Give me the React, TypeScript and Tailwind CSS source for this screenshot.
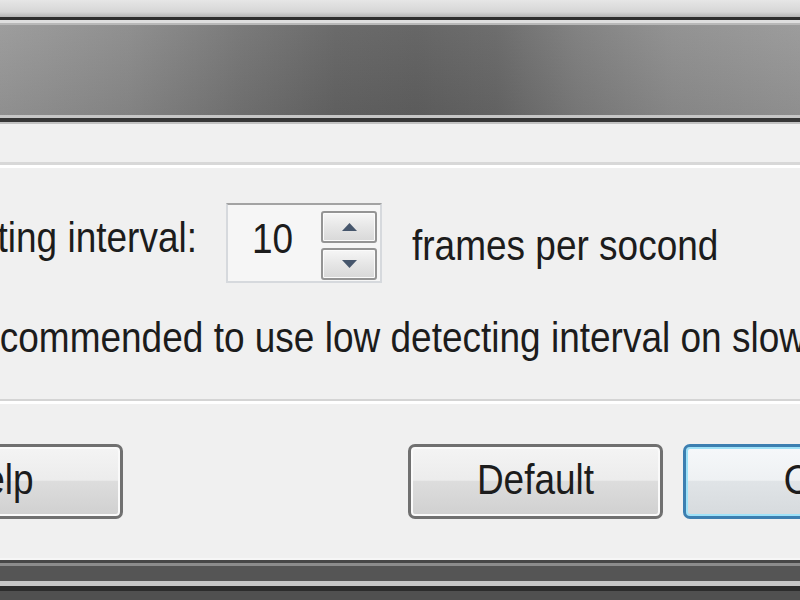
import React from "react";

function Txt({ children, className = "" }: { children: React.ReactNode; className?: string }) {
  // text in the screenshot is a bit taller than Arial at the same width
  return (
    <span className={`inline-block whitespace-nowrap text-[37px] leading-none scale-y-113 ${className}`}>
      {children}
    </span>
  );
}

function Arrow({ down }: { down?: boolean }) {
  return (
    <svg width="15" height="8" viewBox="0 0 15 8">
      <polygon points={down ? "0,0 15,0 7.5,8" : "7.5,0 15,8 0,8"} fill="#46566c" />
    </svg>
  );
}

function SpinBox() {
  return (
    <div className="ml-[29px] flex h-[80px] w-[156px] border-2 border-[#d6d9dd] border-t-[#a3a3a3] bg-[#f6f6f6]">
      <div className="flex-1 pl-[24px] pt-[15px]">
        <Txt>10</Txt>
      </div>
      <div className="mr-[3px] flex w-[56px] flex-col gap-[5px] pt-[6px]">
        <div className="flex h-[32px] items-center justify-center rounded-[3px] border-2 border-[#949494] bg-[linear-gradient(to_bottom,#f6f6f6,#e6e6e6_50%,#d8d8d8)] shadow-[inset_0_0_0_1px_#fbfbfb]">
          <Arrow />
        </div>
        <div className="flex h-[32px] items-center justify-center rounded-[3px] border-2 border-[#949494] bg-[linear-gradient(to_bottom,#f6f6f6,#e6e6e6_50%,#d8d8d8)] shadow-[inset_0_0_0_1px_#fbfbfb]">
          <Arrow down />
        </div>
      </div>
    </div>
  );
}

function Btn({ label, focused, className = "" }: { label: string; focused?: boolean; className?: string }) {
  const look = focused
    ? "border-[#3c7fb1] shadow-[inset_0_0_0_2px_#9fe2f8] bg-[linear-gradient(to_bottom,#f6f8fa_0%,#eef1f3_48%,#e0e4e7_50%,#d6dadd_100%)]"
    : "border-[#707070] shadow-[inset_0_0_0_2px_#fafafa] bg-[linear-gradient(to_bottom,#f4f4f4_0%,#ececec_48%,#dddddd_50%,#d0d0d0_100%)]";
  return (
    <div
      className={`flex h-[75px] w-[255px] shrink-0 items-center justify-center rounded-[7px] border-[3px] pb-1 ${look} ${className}`}
    >
      <Txt>{label}</Txt>
    </div>
  );
}

export default function App() {
  return (
    <div className="flex h-[600px] w-[800px] flex-col overflow-hidden bg-[#f0f0f0] font-['Liberation_Sans',Arial,sans-serif] text-[#1c1c1c]">
      {/* window frame / title bar */}
      <div className="h-[17px] bg-[linear-gradient(to_bottom,#e6e6e6,#d6d6d6_70%,#b4b4b4)]" />
      <div className="h-[3px] bg-[#2e2e2e]" />
      <div className="h-[3px] bg-[#dedede]" />
      <div className="h-[2px] bg-[#b8b8b8]" />
      <div className="relative h-[90px] bg-[linear-gradient(to_right,#9a9a9a_0%,#8c8c8c_16%,#767676_30%,#666666_42%,#626262_52%,#696969_62%,#7e7e7e_72%,#8f8f8f_84%,#999999_100%)]">
        <div className="absolute inset-0 bg-[linear-gradient(to_bottom,rgba(255,255,255,0.03),rgba(0,0,0,0.07))]" />
      </div>
      <div className="h-[3px] bg-[#c6c6c6]" />
      <div className="h-[4px] bg-[#363636]" />
      <div className="h-[2px] bg-[#c2c2c2]" />

      {/* header separator */}
      <div className="mt-[38px] h-[3px] bg-[#d8d8d8]" />
      <div className="h-[3px] bg-white" />

      {/* interval row */}
      <div className="mt-[35px] flex h-[80px] items-start">
        <div className="mt-[16px] flex w-[197px] shrink-0 justify-end">
          <Txt>Detecting interval:</Txt>
        </div>
        <SpinBox />
        <div className="ml-[30px] mt-[24px]">
          <Txt>frames per socond</Txt>
        </div>
      </div>

      {/* hint */}
      <div className="mt-[36px] -ml-[101px]">
        <Txt>It is recommended to use low detecting interval on slow computers.</Txt>
      </div>

      {/* footer separator */}
      <div className="mt-[42px] h-[2px] bg-[#d4d4d4]" />
      <div className="h-[3px] bg-white" />

      {/* buttons */}
      <div className="mt-[40px] flex -ml-[132px]">
        <Btn label="Help" />
        <Btn label="Default" className="ml-[285px]" />
        <Btn label="OK" focused className="ml-[20px]" />
      </div>

      {/* bottom frame */}
      <div className="mt-[39px] h-[2px] bg-[#f6f6f6]" />
      <div className="h-[3px] bg-[#474747]" />
      <div className="h-[3px] bg-[#8c8c8c]" />
      <div className="h-[15px] bg-[#555555]" />
      <div className="h-[5px] bg-[#c6c6c6]" />
      <div className="h-[5px] bg-[#2c2c2c]" />
      <div className="flex-1 bg-[#505050]" />
    </div>
  );
}
